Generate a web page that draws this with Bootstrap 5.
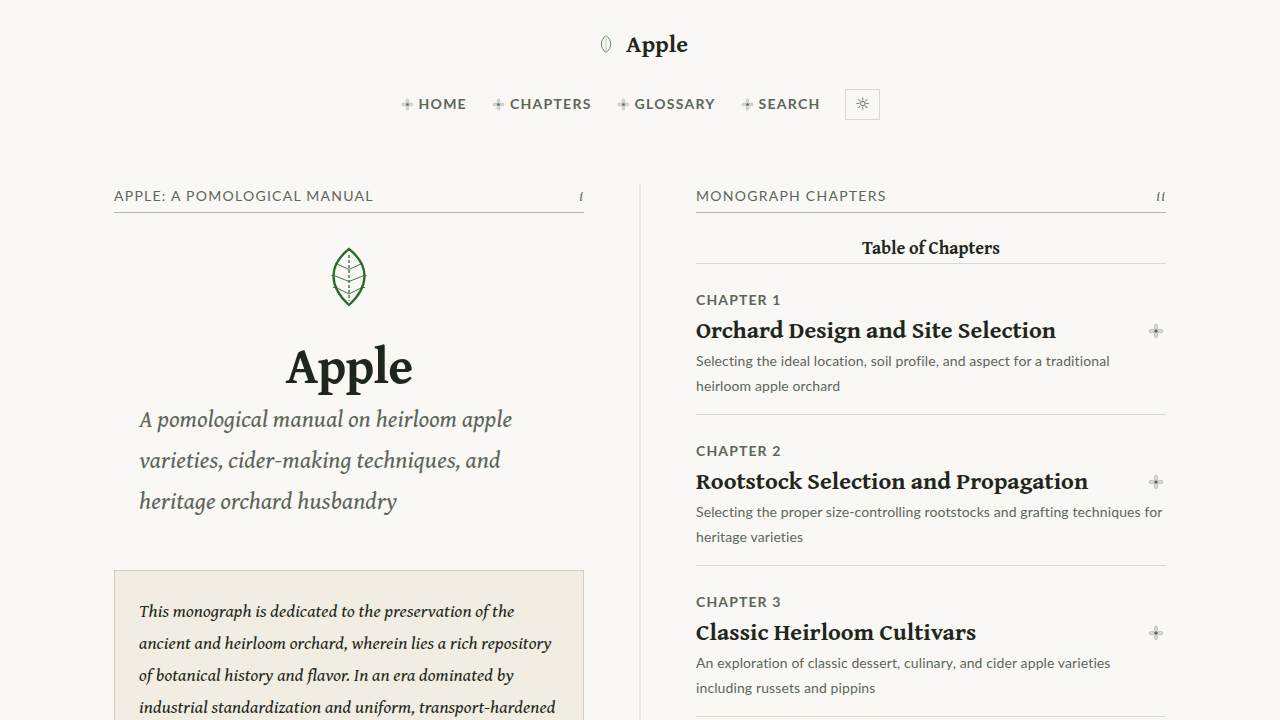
<!DOCTYPE html>
<html lang="en">
<head>
<meta charset="utf-8">
<meta name="viewport" content="width=device-width, initial-scale=1">
<title>Apple: A Pomological Manual</title>
<link href="https://cdn.jsdelivr.net/npm/bootstrap@5.3.0/dist/css/bootstrap.min.css" rel="stylesheet">
<style>
:root{--ink:#1f271d;--muted:#5c665b;--paper:#faf8f4;--rule:#d9d9d4;--leaf:#2d6a2d}
body{background:var(--paper);color:var(--ink);font-family:Lato,sans-serif;font-size:14px;line-height:24px;letter-spacing:.008em}
.serif{font-family:"Gentium Book Basic","Gentium Book Plus","Gentium Basic","Gentium Plus","Liberation Serif",serif;letter-spacing:0}
a{color:inherit;text-decoration:none}
.muted{color:var(--muted)}
.site-header{padding-top:28px}
.brand{font-size:24px;line-height:32px;gap:12px;padding-left:6px}
.site-nav{margin-top:29px;column-gap:25px;padding-left:1px}
.site-nav a{color:var(--muted);font-weight:700;letter-spacing:.09em;line-height:30px;gap:5px}
.theme-btn{width:35px;height:31px;border:1px solid var(--rule);background:transparent;color:var(--muted);font-family:"DejaVu Sans",sans-serif;font-size:17px;line-height:1}
.spread{max-width:1100px;padding:64px 24px 0}
.page-left{padding-right:55px}
.page-right{padding-left:55px;border-left:2px solid #e8e7e3}
@media (min-width:992px){.page-left{width:calc(50% - 1px)}.page-right{width:calc(50% + 1px)}}
.running-head{border-bottom:1px solid #b4b6af;height:29px;letter-spacing:.09em}
.folio{font-size:14px;letter-spacing:.09em}
.emblem{margin-top:34px}
.cover-title{font-size:51px;line-height:64px;margin:26px 0 0;letter-spacing:-.02em}
.subtitle{font-size:24px;line-height:41px;margin:1px 0 0;padding:0 25px;letter-spacing:.003em}
.dedication{background:#f1ede2;border:1px solid #cfcec2;margin-top:49px;padding:24px;font-size:18px;line-height:32px;letter-spacing:.005em}
.toc-title{font-size:18px;line-height:24px;margin:23px 0 0;padding-bottom:3px;border-bottom:1px solid var(--rule);letter-spacing:-.005em}
.chapter{border-bottom:1px solid var(--rule);padding:24px 0 16px}
.chapter-no{font-weight:700;letter-spacing:.08em}
.chapter h3{font-size:24px;line-height:36px;margin:0}
.chapter p{line-height:25px;margin:0}
.flower-lg{margin:1px 2px 0 0}
</style>
</head>
<body>
<svg class="d-none" aria-hidden="true">
<symbol id="flower" viewBox="0 0 16 16"><g fill="#5c665b" fill-opacity=".22" stroke="#5c665b" stroke-opacity=".3" stroke-width=".8"><ellipse cx="8" cy="4" rx="1.7" ry="3"/><ellipse cx="8" cy="12" rx="1.7" ry="3"/><ellipse cx="4" cy="8" rx="3" ry="1.7"/><ellipse cx="12" cy="8" rx="3" ry="1.7"/></g><circle cx="8" cy="8" r="1.6" fill="#46564a" fill-opacity=".9"/></symbol>
</svg>
<header class="site-header d-flex flex-column align-items-center">
<a href="#" class="brand serif fw-bold d-flex align-items-center"><svg width="16" height="20" viewBox="0 0 16 20" fill="none" stroke="#2d6a2d" stroke-opacity=".75"><path d="M8 1.5C4.7 4.5 3.3 7 3.3 10S4.7 16 8 18.5C11.300 16 12.700 13 12.700 10S11.300 4.500 8 1.500Z"/><path d="M8 4v13" stroke-opacity=".3"/></svg>Apple</a>
<nav class="site-nav d-flex flex-wrap justify-content-center align-items-start" aria-label="Main">
<a href="#" class="d-flex align-items-center"><svg width="13" height="13"><use href="#flower"/></svg>HOME</a>
<a href="#chapters" class="d-flex align-items-center"><svg width="13" height="13"><use href="#flower"/></svg>CHAPTERS</a>
<a href="#" class="d-flex align-items-center"><svg width="13" height="13"><use href="#flower"/></svg>GLOSSARY</a>
<a href="#" class="d-flex align-items-center"><svg width="13" height="13"><use href="#flower"/></svg>SEARCH</a>
<button type="button" class="theme-btn p-0" aria-label="Toggle theme">☼</button>
</nav>
</header>
<main class="spread container-fluid">
<div class="row g-0">
<section class="page-left col-12 col-lg-6">
<div class="running-head muted d-flex justify-content-between"><span>APPLE: A POMOLOGICAL MANUAL</span><span class="folio serif fst-italic">i</span></div>
<div class="emblem d-flex justify-content-center"><svg width="60" height="60" viewBox="0 0 60 60" fill="none" stroke="#2d6a2d"><path d="M30 2C20 10 14.500 20 14.500 29S20 49 30 58C40 49 45.500 38 45.500 29S40 10 30 2Z" stroke-width="2.300"/><path d="M30 8v46" stroke-opacity=".8" stroke-width="1.600" stroke-dasharray="3 2"/><path stroke-opacity=".9" d="M16 16L30 22.500L44 16M12.500 28.500H15L30 34.500L45 28.500H47.500M14 40.500H17L30 47L43 40.500H46"/></svg></div>
<h1 class="cover-title serif fw-bold text-center">Apple</h1>
<p class="subtitle serif fst-italic muted">A pomological manual on heirloom apple varieties, cider-making techniques, and heritage orchard husbandry</p>
<div class="dedication serif fst-italic">This monograph is dedicated to the preservation of the ancient and heirloom orchard, wherein lies a rich repository of botanical history and flavor. In an era dominated by industrial standardization and uniform, transport-hardened</div>
</section>
<section class="page-right col-12 col-lg-6" id="chapters">
<div class="running-head muted d-flex justify-content-between"><span>MONOGRAPH CHAPTERS</span><span class="folio serif fst-italic">ii</span></div>
<h2 class="toc-title serif fw-bold text-center">Table of Chapters</h2>
<article class="chapter"><div class="chapter-no muted">CHAPTER 1</div>
<h3 class="serif fw-bold d-flex justify-content-between align-items-center"><a href="#">Orchard Design and Site Selection</a><svg class="flower-lg flex-shrink-0" width="16" height="16"><use href="#flower"/></svg></h3>
<p class="muted">Selecting the ideal location, soil profile, and aspect for a traditional heirloom apple orchard</p></article>
<article class="chapter"><div class="chapter-no muted">CHAPTER 2</div>
<h3 class="serif fw-bold d-flex justify-content-between align-items-center"><a href="#">Rootstock Selection and Propagation</a><svg class="flower-lg flex-shrink-0" width="16" height="16"><use href="#flower"/></svg></h3>
<p class="muted">Selecting the proper size-controlling rootstocks and grafting techniques for heritage varieties</p></article>
<article class="chapter"><div class="chapter-no muted">CHAPTER 3</div>
<h3 class="serif fw-bold d-flex justify-content-between align-items-center"><a href="#">Classic Heirloom Cultivars</a><svg class="flower-lg flex-shrink-0" width="16" height="16"><use href="#flower"/></svg></h3>
<p class="muted">An exploration of classic dessert, culinary, and cider apple varieties including russets and pippins</p></article>
</section>
</div>
</main>
<script src="https://cdn.jsdelivr.net/npm/bootstrap@5.3.0/dist/js/bootstrap.bundle.min.js"></script>
</body>
</html>
